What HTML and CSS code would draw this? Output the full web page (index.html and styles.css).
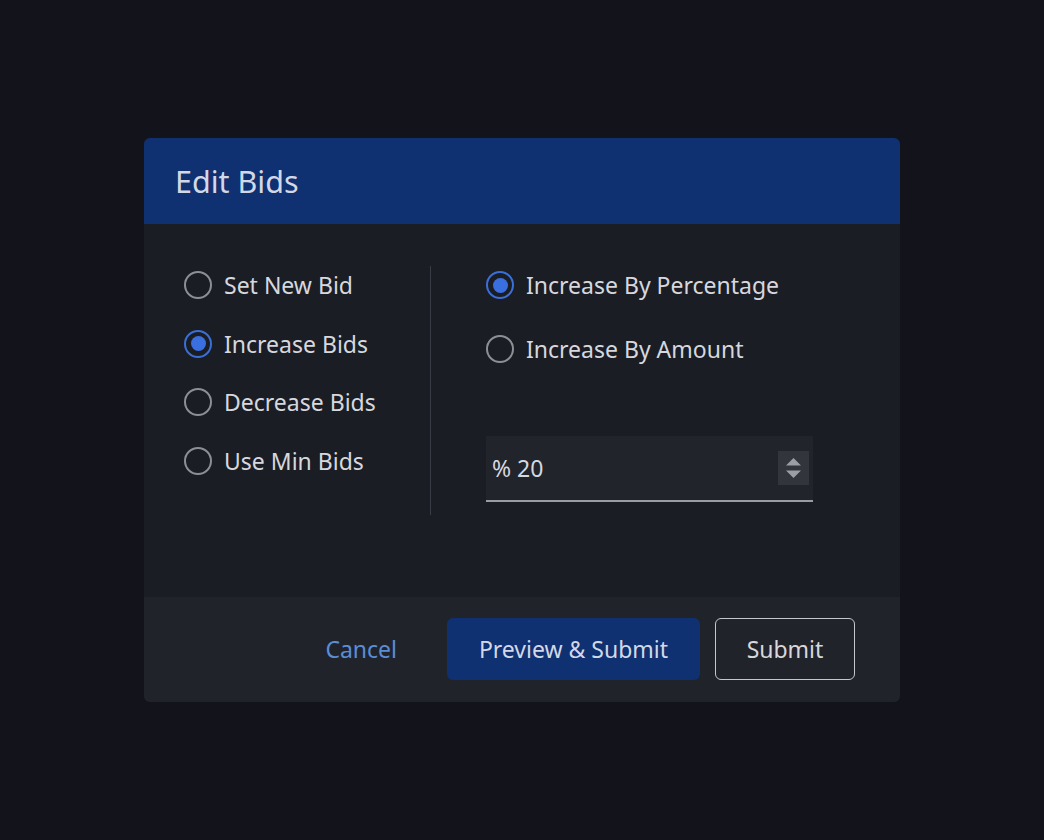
FILE: index.html
```html
<!DOCTYPE html>
<html>
<head>
<meta charset="utf-8">
<link rel="stylesheet" href="styles.css">
</head>
<body>
<div class="dialog">
  <div class="dialog-header">Edit Bids</div>
  <div class="dialog-body">
    <div class="col-left">
      <label class="radio-row"><span class="radio"></span><span class="label">Set New Bid</span></label>
      <label class="radio-row"><span class="radio checked"></span><span class="label">Increase Bids</span></label>
      <label class="radio-row"><span class="radio"></span><span class="label">Decrease Bids</span></label>
      <label class="radio-row"><span class="radio"></span><span class="label">Use Min Bids</span></label>
    </div>
    <div class="divider"></div>
    <div class="col-right">
      <div class="right-options">
        <label class="radio-row"><span class="radio checked"></span><span class="label">Increase By Percentage</span></label>
        <label class="radio-row"><span class="radio"></span><span class="label">Increase By Amount</span></label>
      </div>
      <div class="number-input">
        <span class="value">% 20</span>
        <span class="spinner">
          <svg width="31" height="34" viewBox="0 0 31 34">
            <polygon points="15.5,7 23,14.5 8,14.5" fill="#9c9ea6"/>
            <polygon points="8,19.5 23,19.5 15.5,27" fill="#9c9ea6"/>
          </svg>
        </span>
      </div>
    </div>
  </div>
  <div class="dialog-footer">
    <button class="btn btn-link">Cancel</button>
    <button class="btn btn-primary">Preview &amp; Submit</button>
    <button class="btn btn-outline">Submit</button>
  </div>
</div>
</body>
</html>
```
FILE: styles.css
```css
* { box-sizing: border-box; }
html, body { margin: 0; padding: 0; }
body {
  background: #12131b;
  height: 100vh;
  display: flex;
  align-items: center;
  justify-content: center;
  font-family: "Noto Sans", "Open Sans", sans-serif;
  color: #d6d8de;
}
.dialog {
  width: 756px;
  height: 564px;
  border-radius: 6px;
  overflow: hidden;
  background: #1b1d25;
  display: flex;
  flex-direction: column;
}
.dialog-header {
  height: 86px;
  background: #0f3071;
  color: #d3d8e6;
  font-size: 30.5px;
  padding-left: 31px;
  display: flex;
  align-items: center;
}
.dialog-body {
  flex: 1;
  display: flex;
  padding: 42px 0 0 40px;
}
.col-left {
  width: 246px;
  display: flex;
  flex-direction: column;
  gap: 20.5px;
}
.radio-row {
  height: 38px;
  display: flex;
  align-items: center;
  gap: 12px;
  font-size: 23px;
  color: #d6d8de;
}
.radio {
  width: 28px;
  height: 28px;
  border-radius: 50%;
  border: 2px solid #8d8f96;
  flex: none;
  display: flex;
  align-items: center;
  justify-content: center;
}
.radio.checked { border-color: #3a6fd6; }
.radio.checked::after {
  content: "";
  width: 15px;
  height: 15px;
  border-radius: 50%;
  background: #3a6fe0;
}
.divider {
  width: 1px;
  height: 249px;
  background: #3a3c45;
}
.col-right {
  padding-left: 55px;
  display: flex;
  flex-direction: column;
}
.right-options {
  display: flex;
  flex-direction: column;
  gap: 26px;
}
.number-input {
  margin-top: 68px;
  width: 327px;
  height: 66px;
  background: #22242c;
  border-bottom: 2px solid #9a9ca4;
  display: flex;
  align-items: center;
  justify-content: space-between;
  padding: 0 4px 0 6px;
  font-size: 23px;
  color: #d6d8de;
}
.spinner {
  width: 31px;
  height: 34px;
  background: #33353d;
  display: flex;
}
.dialog-footer {
  height: 105px;
  background: #21232b;
  display: flex;
  align-items: flex-start;
  justify-content: flex-end;
  padding: 21px 45px 0 0;
}
.btn {
  font-family: inherit;
  font-size: 23px;
  height: 62px;
  border-radius: 6px;
  border: none;
  background: none;
  cursor: pointer;
}
.btn-link {
  color: #5a8ed6;
  padding: 0;
  margin-right: 50px;
}
.btn-primary {
  width: 253px;
  background: #0f3071;
  color: #d3d8e6;
  margin-right: 15px;
}
.btn-outline {
  width: 140px;
  border: 1.5px solid #c6c7cc;
  color: #d6d8de;
}
```
